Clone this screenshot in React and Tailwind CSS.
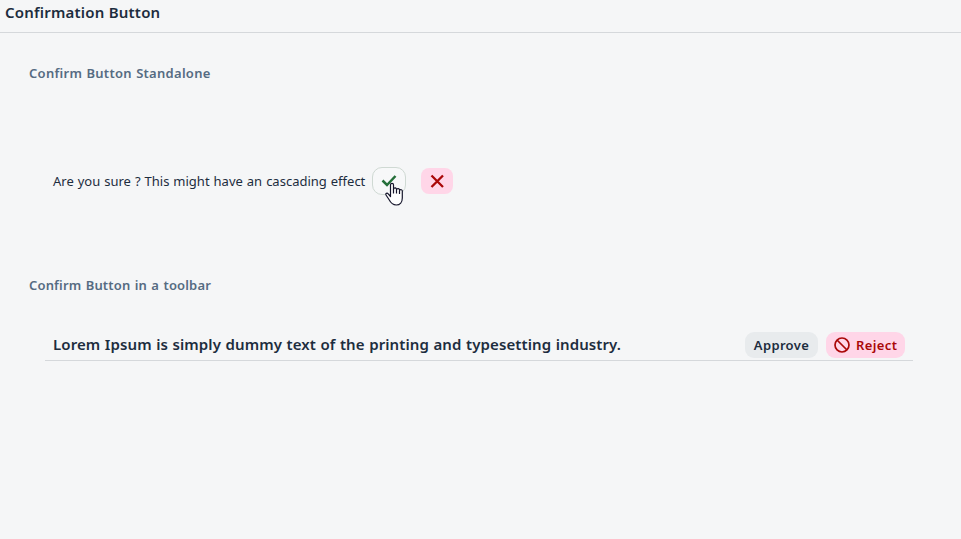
const T = ({ className, children }) => (
  <span className={`block whitespace-nowrap ${className}`}>{children}</span>
);

export default function App() {
  return (
    <div className="h-[539px] w-[961px] overflow-hidden bg-[#f5f6f7] text-[#1d2d3e] [font-family:'Noto_Sans','Liberation_Sans',sans-serif]">
      <header className="flex h-[33px] items-start border-b border-[#d5d8db] pl-[5px] pt-px">
        <T className="text-[15px] font-semibold leading-[22px] tracking-[0.21px]">Confirmation Button</T>
      </header>
      <main className="px-[29px]">
        <T className="pt-[30px] text-[13px] font-semibold leading-[20px] tracking-[0.28px] [word-spacing:0.6px] text-[#556b82]">Confirm Button Standalone</T>
        <section className="mt-[84px] flex h-7 items-center pl-6">
          <T className="w-[319px] pt-px text-[13px] [word-spacing:0.6px]">Are you sure ? This might have an cascading effect</T>
          <button className="relative flex h-7 w-[34px] items-center justify-center rounded-[10px] border border-[#cfd9d3] bg-[#f7f8f9]">
            <svg className="size-4" viewBox="0 0 16 16" fill="none" stroke="#256f3a" strokeWidth="2.500"><path d="M1.500 7.500l4.500 4.500 8.500-9" /></svg>
            <svg className="absolute left-[12px] top-[14px] h-6 w-[19px]" viewBox="0 0 19 24" fill="#fff" stroke="#15152b" strokeWidth="1.200" strokeLinejoin="round"><path d="M5.500 14.500V2.800a1.500 1.500 0 0 1 3 0v4.400a1.500 1.500 0 0 1 3 .5a1.500 1.500 0 0 1 3 .8a1.500 1.500 0 0 1 2.800 1v6.500c0 4-2.300 7-6 7c-4 0-5.500-2-7.300-5.500L1 13c-.6-1.500 1-2.400 2.200-1.200z" /><path d="M8.500 7v4.500M11.500 8v3.500M14.500 9v3" /></svg>
          </button>
          <button className="ml-[15px] flex h-[26px] w-8 items-center justify-center rounded-lg bg-[#ffd6e8]">
            <svg className="size-4" viewBox="0 0 16 16" stroke="#aa0808" strokeWidth="2.300"><path d="M2.500 2.500l11.500 11.500M14 2.500L2.500 14" /></svg>
          </button>
        </section>
        <T className="mt-[80px] text-[13px] font-semibold leading-[20px] tracking-[0.16px] [word-spacing:0.8px] text-[#556b82]">Confirm Button in a toolbar</T>
        <section className="ml-4 mt-[36px] flex h-[30px] w-[868px] items-center border-b border-[#d5d8db] pb-[2px] pl-2 pr-2">
          <T className="flex-1 text-[15px] font-semibold tracking-[0.1px] [word-spacing:0.5px]">Lorem Ipsum is simply dummy text of the printing and typesetting industry.</T>
          <button className="h-[26px] w-[73px] rounded-[9px] bg-[#e8ebed] pt-[2px] text-[13px] font-semibold tracking-[0.35px]">Approve</button>
          <button className="ml-2 flex h-[26px] w-[79px] items-center rounded-[9px] bg-[#ffd6e8] pl-2 text-[13px] font-semibold tracking-[0.4px] text-[#aa0808]">
            <svg className="mr-[6px] size-4" viewBox="0 0 16 16" fill="none" stroke="currentColor" strokeWidth="1.700"><circle cx="8" cy="8" r="7" /><path d="M3 3l10 10" /></svg>
            <span className="pt-[2px]">Reject</span>
          </button>
        </section>
      </main>
    </div>
  );
}
